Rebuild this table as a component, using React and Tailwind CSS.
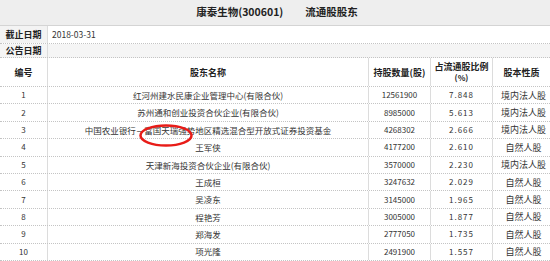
const rows = [
  ["1", "红河州建水民康企业管理中心(有限合伙)", "12561900", "7.848", "境内法人股"],
  ["2", "苏州通和创业投资合伙企业(有限合伙)", "8985000", "5.613", "境内法人股"],
  ["3", "中国农业银行－富国天瑞强势地区精选混合型开放式证券投资基金", "4268302", "2.666", "境内法人股"],
  ["4", "王军侠", "4177200", "2.610", "自然人股"],
  ["5", "天津新海投资合伙企业(有限合伙)", "3570000", "2.230", "境内法人股"],
  ["6", "王成桓", "3247632", "2.029", "自然人股"],
  ["7", "吴凌东", "3145000", "1.965", "自然人股"],
  ["8", "程艳芳", "3005000", "1.877", "自然人股"],
  ["9", "郑海发", "2777050", "1.735", "自然人股"],
  ["10", "项光隆", "2491900", "1.557", "自然人股"],
];

const cols = "grid grid-cols-[48px_321px_62px_62px_1fr]";

export default function App() {
  return (
    <div
      className="relative w-[550px] h-[261px] overflow-hidden bg-white text-[#333] text-[8.5px] leading-none"
      style={{ fontFamily: '"Noto Sans CJK SC", "Noto Sans", sans-serif' }}
    >
      <div className="flex h-[26px] items-center justify-center gap-[22px] border-b border-[#d4d4d4] bg-[#eeeeee] pl-[4px] text-[10.5px] font-bold text-[#222]">
        <span>康泰生物(300601)</span>
        <span>流通股股东</span>
      </div>

      <div className="flex h-[18px] border-b border-dotted border-[#c4c4c4]">
        <div className="flex w-[48px] items-center justify-center border-r border-[#dcdcdc] bg-[#f3f3f3] font-bold text-[9px] text-[#222]">
          截止日期
        </div>
        <div className="flex items-center pl-[4px]">2018-03-31</div>
      </div>

      <div className="flex h-[14px] border-b border-dotted border-[#c4c4c4] bg-[#f5f5f5]">
        <div className="flex w-[48px] items-center justify-center border-r border-[#dcdcdc] font-bold text-[9px] text-[#222]">
          公告日期
        </div>
      </div>

      <div className={`${cols} h-[29px] border-b border-dotted border-[#c4c4c4] font-bold text-[9px] text-[#222]`}>
        <div className="flex items-center justify-center border-r border-[#dcdcdc]">编号</div>
        <div className="flex items-center justify-center border-r border-[#dcdcdc]">股东名称</div>
        <div className="flex items-center justify-center border-r border-[#dcdcdc]">持股数量(股)</div>
        <div className="flex flex-col items-center justify-center border-r border-[#dcdcdc] leading-[11px]">
          <span>占流通股比例</span>
          <span className="text-[8px]">(%)</span>
        </div>
        <div className="flex items-center justify-center">股本性质</div>
      </div>

      {rows.map((r) => (
        <div key={r[0]} className={`${cols} h-[17.4px] border-b border-dotted border-[#c4c4c4]`}>
          <div className="flex items-center justify-center border-r border-[#dcdcdc] text-[8px]">{r[0]}</div>
          <div className="flex items-center justify-center whitespace-nowrap border-r border-[#dcdcdc]">{r[1]}</div>
          <div className="flex items-center justify-center border-r border-[#dcdcdc] text-[8px]">{r[2]}</div>
          <div className="flex items-center justify-center border-r border-[#dcdcdc] text-[8px] tracking-[1px]">{r[3]}</div>
          <div className="flex items-center justify-center pl-[4px] text-[9px]">{r[4]}</div>
        </div>
      ))}

      <svg className="pointer-events-none absolute left-[139px] top-[124px]" width="54" height="23" viewBox="0 0 54 23">
        <ellipse cx="27" cy="11.5" rx="25.5" ry="10" fill="none" stroke="#e81c18" strokeWidth="2.5" />
      </svg>
    </div>
  );
}
